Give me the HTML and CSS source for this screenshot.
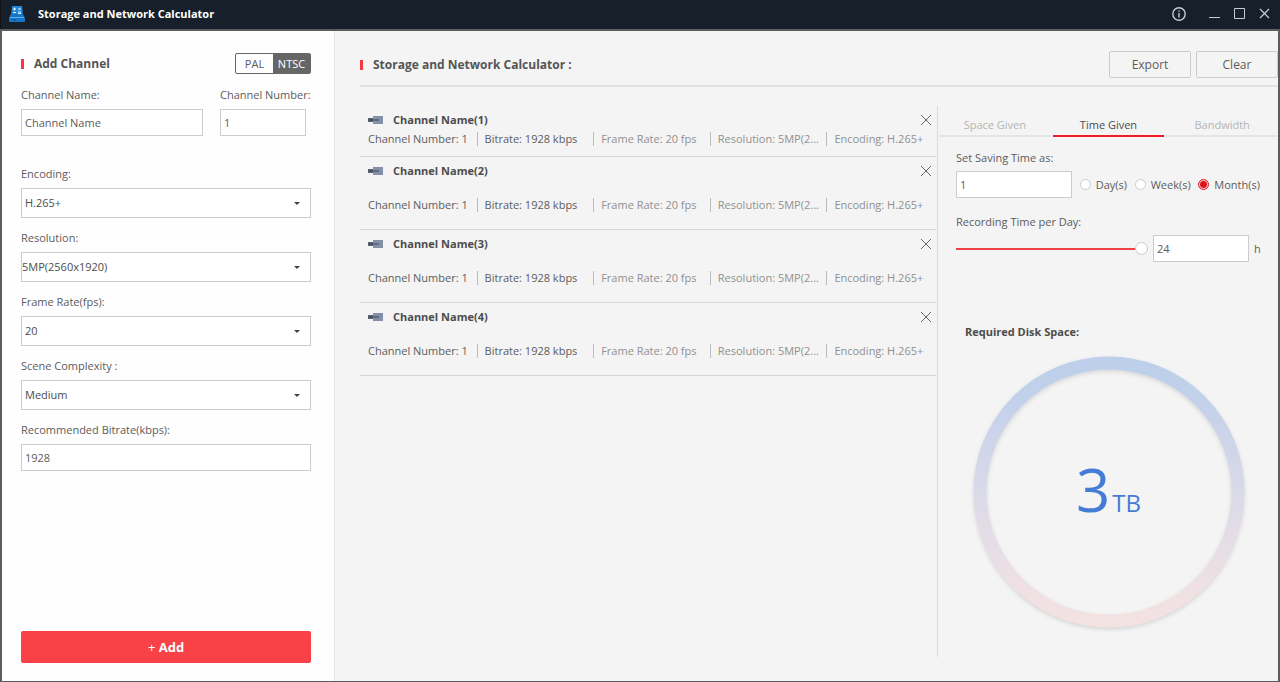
FILE: index.html
```html
<!DOCTYPE html>
<html lang="en">
<head>
  <meta charset="UTF-8">
  <meta name="viewport" content="width=device-width, initial-scale=1.0">
  <title>Storage and Network Calculator</title>
  <link rel="stylesheet" href="styles.css">
</head>
<body>
  <header class="titlebar">
    <svg class="logo" width="16" height="16" viewBox="0 0 16 16">
      <path d="M3 0h10l1 9H2z" fill="#1d86d8"/>
      <path d="M2 8h12l2 4v3q0 1-1 1H1q-1 0-1-1v-3z" fill="#1a74c4"/>
      <path d="M1 11.500h14" stroke="#58b4f2"/>
      <path d="M4 3h3M5.500 1.500v3M9 3h3M4 6.500h3M9 6h3M9 7.500h3" stroke="#e8f6ff"/>
      <path d="M3 14h4" stroke="#0b4f94"/>
    </svg>
    <h1>Storage and Network Calculator</h1>
    <div class="window-buttons">
      <button class="info" aria-label="About">
        <svg width="14" height="14" viewBox="0 0 14 14" fill="none" stroke="#c8ccd0">
          <circle cx="7" cy="7" r="6.200" stroke-width="1.400"/>
          <path d="M7 6v4.500M7 3.500v1.200" stroke-width="1.400"/>
        </svg>
      </button>
      <button aria-label="Minimize">
        <svg width="11" height="11" viewBox="0 0 11 11"><path d="M0 9.500h11" stroke="#c8ccd0"/></svg>
      </button>
      <button aria-label="Maximize">
        <svg width="11" height="11" viewBox="0 0 11 11"><path d="M.5.5h10v10H.5z" fill="none" stroke="#c8ccd0"/></svg>
      </button>
      <button aria-label="Close">
        <svg width="11" height="11" viewBox="0 0 11 11"><path d="M1 1l9 9M10 1l-9 9" stroke="#c8ccd0" stroke-width="1.200"/></svg>
      </button>
    </div>
  </header>

  <div class="window">
    <form class="sidebar">
      <div class="sidebar-head">
        <h2 class="heading">Add Channel</h2>
        <div class="toggle">
          <button type="button">PAL</button>
          <button type="button" class="on">NTSC</button>
        </div>
      </div>
      <div class="name-row">
        <div class="field">
          <label for="chName">Channel Name:</label>
          <input type="text" id="chName" value="Channel Name">
        </div>
        <div class="field number">
          <label for="chNumber">Channel Number:</label>
          <input type="text" id="chNumber" value="1">
        </div>
      </div>
      <div class="field">
        <label for="encoding">Encoding:</label>
        <div class="select"><select id="encoding"><option>H.265+</option></select></div>
      </div>
      <div class="field">
        <label for="resolution">Resolution:</label>
        <div class="select"><select id="resolution" class="tight"><option>5MP(2560x1920)</option></select></div>
      </div>
      <div class="field">
        <label for="frameRate">Frame Rate(fps):</label>
        <div class="select"><select id="frameRate"><option>20</option></select></div>
      </div>
      <div class="field">
        <label for="scene">Scene Complexity :</label>
        <div class="select"><select id="scene"><option>Medium</option></select></div>
      </div>
      <div class="field">
        <label for="bitrate">Recommended Bitrate(kbps):</label>
        <input type="text" id="bitrate" value="1928">
      </div>
      <button type="button" class="add"><span>+</span> Add</button>
    </form>

    <main class="main">
      <div class="main-head">
        <h2 class="heading">Storage and Network Calculator :</h2>
        <button class="btn">Export</button>
        <button class="btn">Clear</button>
      </div>
      <div class="content">
        <ul class="channels">
          <li class="compact">
            <div class="channel-name">
              <svg width="15" height="8" viewBox="0 0 15 8"><path d="M0 2h5v4H0z" fill="#596172"/><path d="M5 0h10v8H5z" fill="#8490a8"/><path d="M1 4h10" stroke="#3d4552"/></svg>
              <h3>Channel Name(1)</h3>
              <button class="remove" aria-label="Remove"><svg width="12" height="12" viewBox="0 0 12 12"><path d="M1 1l10 10M11 1L1 11" stroke="#666"/></svg></button>
            </div>
            <div class="specs"><span>Channel Number: 1</span><span>Bitrate: 1928 kbps</span><span>Frame Rate: 20 fps</span><span>Resolution: 5MP(2...</span><span>Encoding: H.265+</span></div>
          </li>
          <li>
            <div class="channel-name">
              <svg width="15" height="8" viewBox="0 0 15 8"><path d="M0 2h5v4H0z" fill="#596172"/><path d="M5 0h10v8H5z" fill="#8490a8"/><path d="M1 4h10" stroke="#3d4552"/></svg>
              <h3>Channel Name(2)</h3>
              <button class="remove" aria-label="Remove"><svg width="12" height="12" viewBox="0 0 12 12"><path d="M1 1l10 10M11 1L1 11" stroke="#666"/></svg></button>
            </div>
            <div class="specs"><span>Channel Number: 1</span><span>Bitrate: 1928 kbps</span><span>Frame Rate: 20 fps</span><span>Resolution: 5MP(2...</span><span>Encoding: H.265+</span></div>
          </li>
          <li>
            <div class="channel-name">
              <svg width="15" height="8" viewBox="0 0 15 8"><path d="M0 2h5v4H0z" fill="#596172"/><path d="M5 0h10v8H5z" fill="#8490a8"/><path d="M1 4h10" stroke="#3d4552"/></svg>
              <h3>Channel Name(3)</h3>
              <button class="remove" aria-label="Remove"><svg width="12" height="12" viewBox="0 0 12 12"><path d="M1 1l10 10M11 1L1 11" stroke="#666"/></svg></button>
            </div>
            <div class="specs"><span>Channel Number: 1</span><span>Bitrate: 1928 kbps</span><span>Frame Rate: 20 fps</span><span>Resolution: 5MP(2...</span><span>Encoding: H.265+</span></div>
          </li>
          <li>
            <div class="channel-name">
              <svg width="15" height="8" viewBox="0 0 15 8"><path d="M0 2h5v4H0z" fill="#596172"/><path d="M5 0h10v8H5z" fill="#8490a8"/><path d="M1 4h10" stroke="#3d4552"/></svg>
              <h3>Channel Name(4)</h3>
              <button class="remove" aria-label="Remove"><svg width="12" height="12" viewBox="0 0 12 12"><path d="M1 1l10 10M11 1L1 11" stroke="#666"/></svg></button>
            </div>
            <div class="specs"><span>Channel Number: 1</span><span>Bitrate: 1928 kbps</span><span>Frame Rate: 20 fps</span><span>Resolution: 5MP(2...</span><span>Encoding: H.265+</span></div>
          </li>
        </ul>

        <section class="panel">
          <div class="tabs">
            <button>Space Given</button>
            <button class="active">Time Given</button>
            <button>Bandwidth</button>
          </div>
          <div class="settings">
            <label for="saving">Set Saving Time as:</label>
            <div class="saving-row">
              <input type="text" id="saving" value="1">
              <label><input type="radio" name="unit">Day(s)</label>
              <label><input type="radio" name="unit">Week(s)</label>
              <label><input type="radio" name="unit" checked>Month(s)</label>
            </div>
            <label for="hours">Recording Time per Day:</label>
            <div class="slider-row">
              <input type="range" min="0" max="24" value="24" aria-label="Recording hours">
              <input type="text" id="hours" value="24">
              <span>h</span>
            </div>
          </div>
          <h3 class="disk-title">Required Disk Space:</h3>
          <div class="ring">
            <svg viewBox="0 0 280 280">
              <defs>
                <linearGradient id="ringFill" x1="0" y1="0" x2="0" y2="1">
                  <stop offset="0" stop-color="#bdcfea"/>
                  <stop offset="0.150" stop-color="#c3d1eb"/>
                  <stop offset="0.500" stop-color="#dadae8"/>
                  <stop offset="0.850" stop-color="#eee0e4"/>
                  <stop offset="1" stop-color="#f4e2e2"/>
                </linearGradient>
              </defs>
              <circle class="ring-line" cx="140" cy="140" r="129" fill="none" stroke="url(#ringFill)" stroke-width="13"/>
            </svg>
            <p class="amount">3<small>TB</small></p>
          </div>
        </section>
      </div>
    </main>
  </div>
</body>
</html>
```
FILE: styles.css
```css
* {
  box-sizing: border-box;
}
body {
  margin: 0;
  min-height: 100vh;
  display: flex;
  flex-direction: column;
  background: #17202a;
  color: #5c5c5c;
  font: 11px/18px "Open Sans", "Noto Sans", sans-serif;
}
h1, h2, h3, p, ul {
  margin: 0;
  padding: 0;
}
button, input, select {
  font: inherit;
  color: inherit;
  margin: 0;
}
button {
  padding: 0;
  border: none;
  background: none;
  cursor: pointer;
}
svg {
  display: block;
}

/* title bar */
.titlebar {
  display: flex;
  align-items: center;
  height: 29px;
  padding: 0 10px 2px 8px;
  border-left: 1px solid #111;
}
.titlebar h1 {
  flex: 1;
  margin-left: 13px;
  color: #fff;
  font-size: 11px;
}
.window-buttons {
  display: flex;
  align-items: center;
  gap: 14px;
}
.window-buttons .info {
  margin-right: 9px;
}

/* window */
.window {
  flex: 1;
  display: flex;
  background: #f4f4f4;
  border: 2px solid #5c5c5c;
  border-bottom-width: 1px;
}
.sidebar {
  width: 333px;
  display: flex;
  flex-direction: column;
  padding: 22px 23px 18px 19px;
  background: #fefefe;
  border-right: 1px solid #e8e8e8;
}
.sidebar-head {
  display: flex;
  justify-content: space-between;
  align-items: center;
}
.heading {
  display: flex;
  align-items: center;
  font-size: 12px;
  color: #555;
}
.heading::before {
  content: "";
  width: 3px;
  height: 10px;
  margin-right: 10px;
  background: #f93740;
}
.toggle {
  display: flex;
  height: 21px;
  border: 1px solid #666;
  border-radius: 2px;
}
.toggle button {
  width: 37px;
  line-height: 19px;
}
.toggle .on {
  background: #666;
  color: #fff;
}
.name-row {
  display: flex;
  gap: 17px;
  margin: 12px 0 18px;
}
.name-row .field {
  flex: 1;
}
.name-row .number {
  flex: 0 0 91px;
  white-space: nowrap;
}
.field {
  margin-bottom: 11px;
}
.field label {
  display: block;
  margin-bottom: 5px;
}
input[type="text"] {
  display: block;
  width: 100%;
  height: 27px;
  padding: 0 3px;
  background: #fff;
  border: 1px solid #ccc;
  border-radius: 0;
}
.number input[type="text"] {
  width: 86px;
}
.select {
  position: relative;
}
.select::after {
  content: "";
  position: absolute;
  right: 11px;
  top: 14px;
  border: 3px solid transparent;
  border-top-color: #444;
  border-bottom: none;
}
select {
  display: block;
  width: 100%;
  height: 30px;
  padding: 0 3px;
  appearance: none;
  background: #fff;
  border: 1px solid #ccc;
  border-radius: 0;
  color: #4c4c4c;
}
select.tight {
  padding-left: 0;
}
.add {
  height: 32px;
  margin-top: auto;
  background: #f94148;
  border-radius: 2px;
  color: #fff;
  font-size: 13px;
  font-weight: bold;
}
.add span {
  font-weight: normal;
}

/* right side */
.main {
  flex: 1;
  display: flex;
  flex-direction: column;
  padding-left: 25px;
}
.main-head {
  display: flex;
  align-items: center;
  gap: 5px;
  padding: 20px 0 7px;
  border-bottom: 2px solid #e2e2e2;
}
.main-head .heading {
  flex: 1;
}
.btn {
  width: 82px;
  height: 27px;
  border: 1px solid #ccc;
  border-radius: 2px;
  font-size: 12px;
}
.content {
  flex: 1;
  display: flex;
  margin: 19px 0 24px;
}
.channels {
  flex: 1;
  list-style: none;
  padding-right: 1px;
}
.channels li {
  display: flex;
  flex-direction: column;
  gap: 16px;
  padding: 5px 0 15px;
  border-bottom: 1px solid #d6d6d6;
}
.channels .compact {
  gap: 1px;
  padding-bottom: 8px;
}
.channel-name {
  display: flex;
  align-items: center;
  padding: 0 4px 0 8px;
}
.channel-name h3 {
  flex: 1;
  margin-left: 10px;
  font-size: 11px;
  color: #4c4c4c;
}
.specs {
  display: grid;
  grid-template-columns: repeat(4, 117fr) 110fr;
  white-space: nowrap;
  color: #909090;
}
.specs span {
  display: flex;
  align-items: center;
}
.specs span::before {
  content: "";
  height: 14px;
  margin-right: 7px;
  border-left: 1px solid #bbb;
}
.specs span:first-child::before {
  border-color: transparent;
}
.specs span:nth-child(-n+2) {
  color: #5c5c5c;
}

.panel {
  width: 341px;
  padding-left: 1px;
  border-left: 1px solid #dcdcdc;
}
.tabs {
  display: grid;
  grid-template-columns: repeat(3, 1fr);
  gap: 2px;
  padding-top: 8px;
}
.tabs button {
  height: 23px;
  border-bottom: 2px solid #e4e4e4;
  color: #b4b4b4;
}
.tabs .active {
  border-color: #ee1c25;
  color: #4c4c4c;
}
.settings {
  padding: 12px 18px 0 17px;
}
.settings > label {
  display: block;
  margin-bottom: 4px;
}
.saving-row, .slider-row {
  display: flex;
  align-items: center;
}
.saving-row {
  justify-content: space-between;
  margin-bottom: 15px;
}
.saving-row input[type="text"] {
  width: 116px;
}
.saving-row label {
  display: flex;
  align-items: center;
  gap: 5px;
}
input[type="radio"] {
  appearance: none;
  width: 11px;
  height: 11px;
  background: #fff;
  border: 1px solid #ccc;
  border-radius: 50%;
}
input[type="radio"]:checked {
  border-color: #d9141c;
  background: radial-gradient(#d9141c 3px, #fbc4c6 4px);
}
.slider-row {
  gap: 5px;
}
input[type="range"] {
  flex: 1;
  min-width: 0;
  height: 13px;
  appearance: none;
  background: linear-gradient(#f0404a, #f0404a) center / 100% 2px no-repeat;
}
input[type="range"]::-webkit-slider-thumb {
  appearance: none;
  width: 13px;
  height: 13px;
  background: #fff;
  border: 1px solid #ccc;
  border-radius: 50%;
}
.slider-row input[type="text"] {
  width: 96px;
}
.slider-row span {
  width: 6px;
}
.disk-title {
  margin: 61px 0 11px 26px;
  font-size: 11px;
  color: #4c4c4c;
}
.ring {
  display: grid;
  place-items: center;
  width: 280px;
  margin: 0 auto;
}
.ring > * {
  grid-area: 1 / 1;
}
.ring svg {
  width: 100%;
}
.ring-line {
  filter: drop-shadow(0 2px 2px rgba(0, 0, 0, 0.12));
}
.amount {
  padding-top: 8px;
  color: #457dd6;
  font-size: 60px;
  line-height: 72px;
}
.amount small {
  margin-left: 2px;
  font-size: 24px;
}
```
